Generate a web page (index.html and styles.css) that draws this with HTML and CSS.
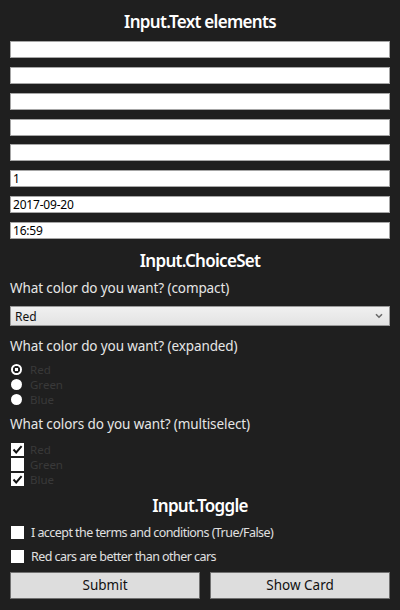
FILE: index.html
```html
<!DOCTYPE html>
<html>
<head>
<meta charset="utf-8">
<link rel="stylesheet" href="styles.css">
</head>
<body>
<div class="card">
  <h2 class="title t1">Input.Text elements</h2>
  <div class="texts">
    <input class="tx" type="text">
    <input class="tx" type="text">
    <input class="tx" type="text">
    <input class="tx" type="text">
    <input class="tx" type="text">
    <input class="tx" type="text" value="1">
    <input class="tx" type="text" value="2017-09-20">
    <input class="tx" type="text" value="16:59">
  </div>

  <h2 class="title t2">Input.ChoiceSet</h2>
  <p class="label l1">What color do you want? (compact)</p>
  <div class="select">
    <span>Red</span>
    <svg class="chev" width="8" height="6" viewBox="0 0 8 6"><path d="M1 1.2 L4 4.2 L7 1.2" fill="none" stroke="#6a6a6a" stroke-width="1.6"/></svg>
  </div>

  <p class="label l2">What color do you want? (expanded)</p>
  <div class="opts">
    <div class="opt"><span class="radio on"></span><span class="otext">Red</span></div>
    <div class="opt"><span class="radio"></span><span class="otext">Green</span></div>
    <div class="opt"><span class="radio"></span><span class="otext">Blue</span></div>
  </div>

  <p class="label l3">What colors do you want? (multiselect)</p>
  <div class="opts checks">
    <div class="opt"><span class="box"><svg width="13" height="13" viewBox="0 0 13 13"><path d="M2.5 6.5 L5.2 9.4 L10.6 3.2" fill="none" stroke="#111" stroke-width="2"/></svg></span><span class="otext">Red</span></div>
    <div class="opt"><span class="box"></span><span class="otext">Green</span></div>
    <div class="opt"><span class="box"><svg width="13" height="13" viewBox="0 0 13 13"><path d="M2.5 6.5 L5.2 9.4 L10.6 3.2" fill="none" stroke="#111" stroke-width="2"/></svg></span><span class="otext">Blue</span></div>
  </div>

  <h2 class="title t3">Input.Toggle</h2>
  <div class="toggle tg1"><span class="box"></span><span class="ttext">I accept the terms and conditions (True/False)</span></div>
  <div class="toggle tg2"><span class="box"></span><span class="ttext">Red cars are better than other cars</span></div>

  <div class="actions">
    <button class="btn">Submit</button>
    <button class="btn">Show Card</button>
  </div>
</div>
</body>
</html>
```

FILE: styles.css
```css
html, body {
  margin: 0;
  padding: 0;
  background: #1f1f1f;
}
body {
  font-family: "Noto Sans", "Open Sans", sans-serif;
  color: #e4e4e4;
}
.card {
  padding: 11px 10px 0;
}
.title {
  margin: 0;
  font-size: 17px;
  line-height: 22px;
  font-weight: 600;
  letter-spacing: -0.7px;
  color: #ffffff;
  text-align: center;
}
.texts {
  margin-top: 8px;
  display: flex;
  flex-direction: column;
  gap: 8.86px;
}
.tx {
  display: block;
  box-sizing: border-box;
  width: 100%;
  height: 17px;
  margin: 0;
  padding: 0 2px;
  border: 1px solid #a6a6a6;
  background: #fff;
  font-family: inherit;
  font-size: 12px;
  letter-spacing: -0.2px;
  color: #000;
  outline: none;
}
.t2 { margin-top: 11.4px; }
.label {
  margin: 0;
  font-size: 13.5px;
  line-height: 19px;
  letter-spacing: -0.1px;
  color: #e6e6e6;
}
.l1 { margin-top: 6.6px; }
.l2 { margin-top: 11px; }
.l3 { margin-top: 8px; }
.select {
  margin-top: 8px;
  box-sizing: border-box;
  height: 20px;
  border: 1px solid #9a9a9a;
  background: linear-gradient(#f0f0f0, #e3e3e3);
  display: flex;
  align-items: center;
  justify-content: space-between;
  padding: 0 6px 0 4px;
  font-size: 12px;
  color: #111;
}
.chev { display: block; }
.opts {
  margin-top: 6px;
  display: flex;
  flex-direction: column;
}
.opts.checks { margin-top: 8px; }
.opt {
  height: 15px;
  display: flex;
  align-items: center;
  gap: 8px;
  padding-left: 1px;
}
.checks .opt { gap: 6px; }
.otext {
  font-size: 11.5px;
  line-height: 14px;
  color: #393939;
}
.radio {
  width: 11px;
  height: 11px;
  border-radius: 50%;
  background: #fff;
  flex: none;
}
.radio.on {
  background: radial-gradient(circle, #fff 0 1.5px, #1f1f1f 1.9px 3.4px, #fff 3.8px);
}
.box {
  width: 13px;
  height: 13px;
  background: #fff;
  flex: none;
  display: block;
}
.box svg { display: block; }
.t3 { margin-top: 8.4px; }
.toggle {
  height: 18px;
  display: flex;
  align-items: center;
  gap: 7px;
  padding-left: 1px;
}
.tg1 { margin-top: 6.6px; }
.tg2 { margin-top: 6px; }
.ttext {
  font-size: 12.5px;
  letter-spacing: -0.55px;
  color: #e0e0e0;
}
.actions {
  margin-top: 6px;
  display: grid;
  grid-template-columns: 190px 1fr;
  gap: 10px;
}
.btn {
  box-sizing: border-box;
  height: 27px;
  margin: 0;
  border: 1px solid #707070;
  background: #dddddd;
  font-family: inherit;
  font-size: 13.5px;
  color: #111;
  padding: 0;
}
```
